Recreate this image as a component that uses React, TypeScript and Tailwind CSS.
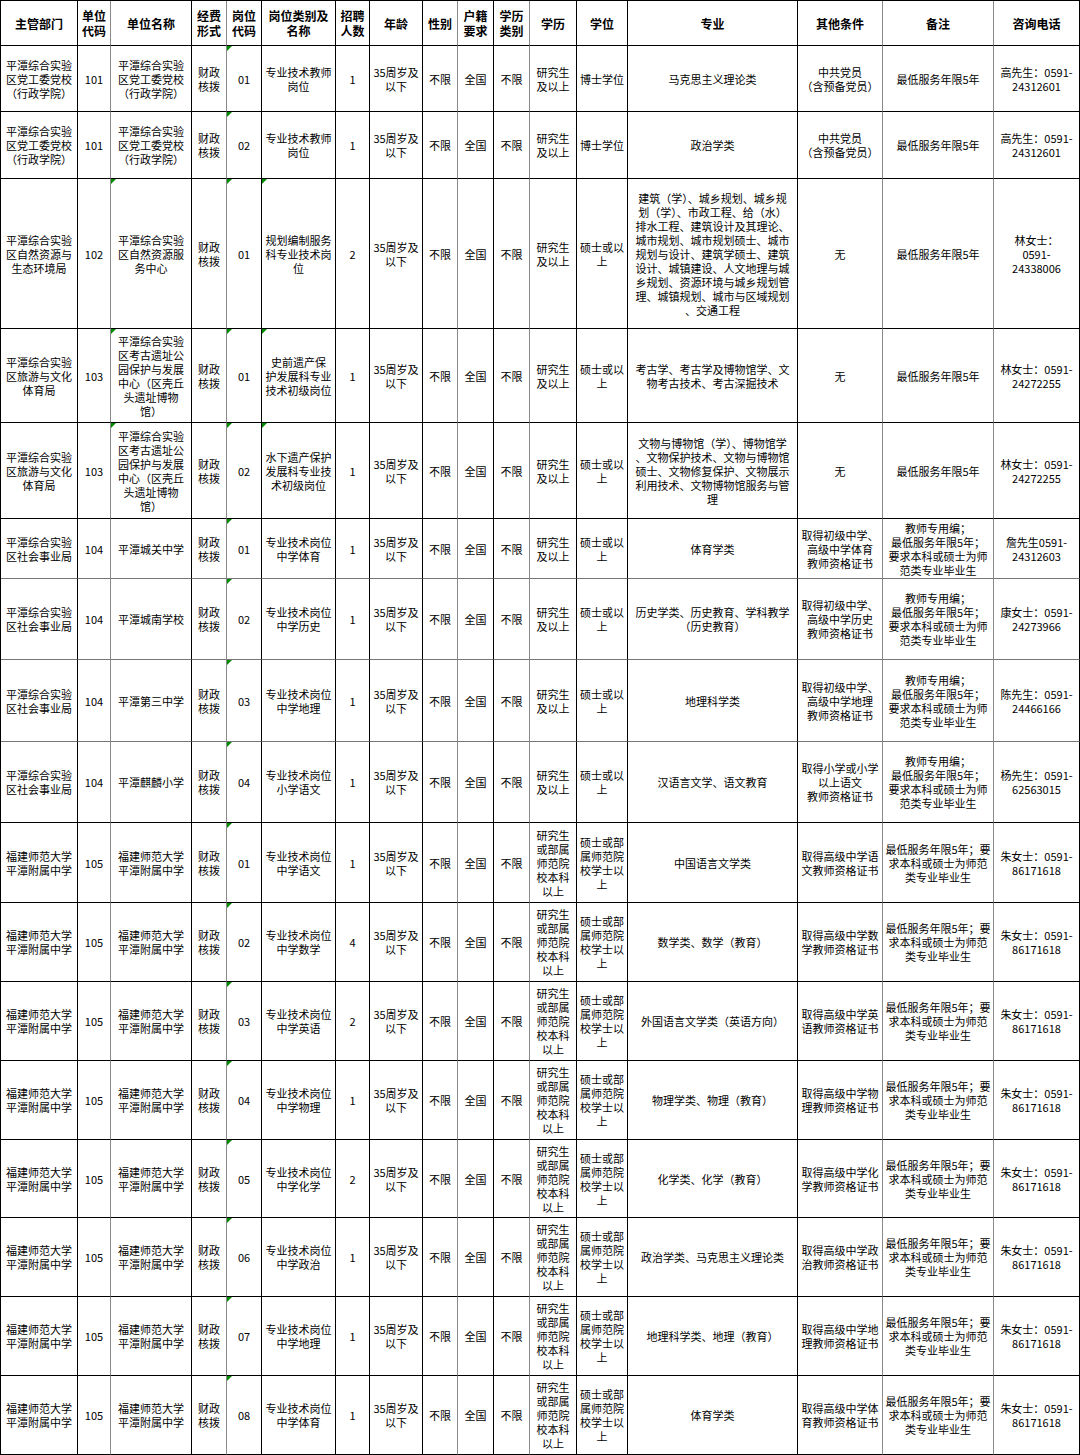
import React from "react";

// 招聘岗位表：列宽/行高按原表量出
type Cell = string | string[];

type Row = {
  cells: Cell[];
  tri: number[]; // 左上角有绿色小三角的列
  grayLine?: boolean;
};

const headers: Cell[] = [
  "主管部门",
  ["单位", "代码"],
  "单位名称",
  ["经费", "形式"],
  ["岗位", "代码"],
  ["岗位类别及", "名称"],
  ["招聘", "人数"],
  "年龄",
  "性别",
  ["户籍", "要求"],
  ["学历", "类别"],
  "学历",
  "学位",
  "专业",
  "其他条件",
  "备注",
  "咨询电话",
];

// 列右侧竖线颜色：true = 浅灰
const grayCols = [false, true, false, true, false, false, false, false, true, false, true, false, false, false, true, true, false];

const age = ["35周岁及", "以下"];
const fund = ["财政", "核拨"];
const teacherNote = ["教师专用编；", "最低服务年限5年；", "要求本科或硕士为师", "范类专业毕业生"];
const fsdNote = ["最低服务年限5年；要", "求本科或硕士为师范", "类专业毕业生"];
const fsdEdu = ["研究生", "或部属", "师范院", "校本科", "以上"];
const fsdDeg = ["硕士或部", "属师范院", "校学士以", "上"];
const fsdName = ["福建师范大学", "平潭附属中学"];
const social = ["平潭综合实验", "区社会事业局"];

const rows: Row[] = [
  {
    cells: [
      ["平潭综合实验", "区党工委党校", "（行政学院）"], "101", ["平潭综合实验", "区党工委党校", "（行政学院）"], fund, "01",
      ["专业技术教师", "岗位"], "1", age, "不限", "全国", "不限", ["研究生", "及以上"], "博士学位",
      "马克思主义理论类", ["中共党员", "（含预备党员）"], "最低服务年限5年", ["高先生：0591-", "24312601"],
    ],
    tri: [4],
  },
  {
    cells: [
      ["平潭综合实验", "区党工委党校", "（行政学院）"], "101", ["平潭综合实验", "区党工委党校", "（行政学院）"], fund, "02",
      ["专业技术教师", "岗位"], "1", age, "不限", "全国", "不限", ["研究生", "及以上"], "博士学位",
      "政治学类", ["中共党员", "（含预备党员）"], "最低服务年限5年", ["高先生：0591-", "24312601"],
    ],
    tri: [4],
  },
  {
    cells: [
      ["平潭综合实验", "区自然资源与", "生态环境局"], "102", ["平潭综合实验", "区自然资源服", "务中心"], fund, "01",
      ["规划编制服务", "科专业技术岗", "位"], "2", age, "不限", "全国", "不限", ["研究生", "及以上"], ["硕士或以", "上"],
      [
        "建筑（学）、城乡规划、城乡规",
        "划（学）、市政工程、给（水）",
        "排水工程、建筑设计及其理论、",
        "城市规划、城市规划硕士、城市",
        "规划与设计、建筑学硕士、建筑",
        "设计、城镇建设、人文地理与城",
        "乡规划、资源环境与城乡规划管",
        "理、城镇规划、城市与区域规划",
        "、交通工程",
      ],
      "无", "最低服务年限5年", ["林女士：", "0591-", "24338006"],
    ],
    tri: [2, 4, 5],
  },
  {
    cells: [
      ["平潭综合实验", "区旅游与文化", "体育局"], "103",
      ["平潭综合实验", "区考古遗址公", "园保护与发展", "中心（区壳丘", "头遗址博物", "馆）"], fund, "01",
      ["史前遗产保", "护发展科专业", "技术初级岗位"], "1", age, "不限", "全国", "不限", ["研究生", "及以上"], ["硕士或以", "上"],
      ["考古学、考古学及博物馆学、文", "物考古技术、考古深掘技术"], "无", "最低服务年限5年", ["林女士：0591-", "24272255"],
    ],
    tri: [2, 4, 5],
  },
  {
    cells: [
      ["平潭综合实验", "区旅游与文化", "体育局"], "103",
      ["平潭综合实验", "区考古遗址公", "园保护与发展", "中心（区壳丘", "头遗址博物", "馆）"], fund, "02",
      ["水下遗产保护", "发展科专业技", "术初级岗位"], "1", age, "不限", "全国", "不限", ["研究生", "及以上"], ["硕士或以", "上"],
      [
        "文物与博物馆（学）、博物馆学",
        "、文物保护技术、文物与博物馆",
        "硕士、文物修复保护、文物展示",
        "利用技术、文物博物馆服务与管",
        "理",
      ],
      "无", "最低服务年限5年", ["林女士：0591-", "24272255"],
    ],
    tri: [2, 4, 5],
  },
  {
    cells: [
      social, "104", "平潭城关中学", fund, "01", ["专业技术岗位", "中学体育"], "1", age, "不限", "全国", "不限",
      ["研究生", "及以上"], ["硕士或以", "上"], "体育学类", ["取得初级中学、", "高级中学体育", "教师资格证书"],
      teacherNote, ["詹先生0591-", "24312603"],
    ],
    tri: [4],
    grayLine: true,
  },
  {
    cells: [
      social, "104", "平潭城南学校", fund, "02", ["专业技术岗位", "中学历史"], "1", age, "不限", "全国", "不限",
      ["研究生", "及以上"], ["硕士或以", "上"], ["历史学类、历史教育、学科教学", "（历史教育）"],
      ["取得初级中学、", "高级中学历史", "教师资格证书"], teacherNote, ["康女士：0591-", "24273966"],
    ],
    tri: [4],
    grayLine: true,
  },
  {
    cells: [
      social, "104", "平潭第三中学", fund, "03", ["专业技术岗位", "中学地理"], "1", age, "不限", "全国", "不限",
      ["研究生", "及以上"], ["硕士或以", "上"], "地理科学类", ["取得初级中学、", "高级中学地理", "教师资格证书"],
      teacherNote, ["陈先生：0591-", "24466166"],
    ],
    tri: [4],
    grayLine: true,
  },
  {
    cells: [
      social, "104", "平潭麒麟小学", fund, "04", ["专业技术岗位", "小学语文"], "1", age, "不限", "全国", "不限",
      ["研究生", "及以上"], ["硕士或以", "上"], "汉语言文学、语文教育", ["取得小学或小学", "以上语文", "教师资格证书"],
      teacherNote, ["杨先生：0591-", "62563015"],
    ],
    tri: [4],
  },
];

const fsdJobs: [string, string, string, string, string[]][] = [
  ["01", "中学语文", "1", "中国语言文学类", ["取得高级中学语", "文教师资格证书"]],
  ["02", "中学数学", "4", "数学类、数学（教育）", ["取得高级中学数", "学教师资格证书"]],
  ["03", "中学英语", "2", "外国语言文学类（英语方向）", ["取得高级中学英", "语教师资格证书"]],
  ["04", "中学物理", "1", "物理学类、物理（教育）", ["取得高级中学物", "理教师资格证书"]],
  ["05", "中学化学", "2", "化学类、化学（教育）", ["取得高级中学化", "学教师资格证书"]],
  ["06", "中学政治", "1", "政治学类、马克思主义理论类", ["取得高级中学政", "治教师资格证书"]],
  ["07", "中学地理", "1", "地理科学类、地理（教育）", ["取得高级中学地", "理教师资格证书"]],
  ["08", "中学体育", "1", "体育学类", ["取得高级中学体", "育教师资格证书"]],
];

fsdJobs.forEach(([code, subj, num, major, other]) => {
  rows.push({
    cells: [
      fsdName, "105", fsdName, fund, code, ["专业技术岗位", subj], num, age, "不限", "全国", "不限",
      fsdEdu, fsdDeg, major, other, fsdNote, ["朱女士：0591-", "86171618"],
    ],
    tri: [4],
  });
});

function Lines({ value }: { value: Cell }) {
  const list = Array.isArray(value) ? value : [value];
  return (
    <div>
      {list.map((l, i) => (
        <div key={i} className="whitespace-nowrap">
          {l}
        </div>
      ))}
    </div>
  );
}

export default function App() {
  return (
    <div className="w-[1080px] h-[1455px] bg-white text-black font-['Noto_Sans_CJK_SC','Noto_Sans',sans-serif] overflow-hidden">
      <div className="grid grid-cols-[77px_33px_81px_35px_35px_74px_34px_53px_35px_36px_36px_47px_51px_170px_85px_111px_86px] grid-rows-[45px_66px_67px_150px_94px_96px_60px_81px_82px_81px_80px_79px_79px_79px_78px_79px_79px_79px] border-l border-t border-black">
        {headers.map((h, c) => (
          <div
            key={"h" + c}
            className={
              "flex items-center justify-center text-center text-[12px] leading-[15px] font-bold border-r border-b border-b-black " +
              (grayCols[c] ? "border-r-[#8a8a8a]" : "border-r-black")
            }
          >
            <Lines value={h} />
          </div>
        ))}
        {rows.map((row, r) =>
          row.cells.map((cell, c) => (
            <div
              key={r + "-" + c}
              className={
                "relative flex items-center justify-center text-center text-[11px] leading-[14px] border-r border-b " +
                (grayCols[c] ? "border-r-[#8a8a8a] " : "border-r-black ") +
                (row.grayLine ? "border-b-[#777777]" : "border-b-black")
              }
            >
              {row.tri.includes(c) && (
                <span className="absolute left-0 top-0 w-0 h-0 border-t-[5px] border-r-[5px] border-t-[#008a00] border-r-transparent" />
              )}
              <Lines value={cell} />
            </div>
          ))
        )}
      </div>
    </div>
  );
}
